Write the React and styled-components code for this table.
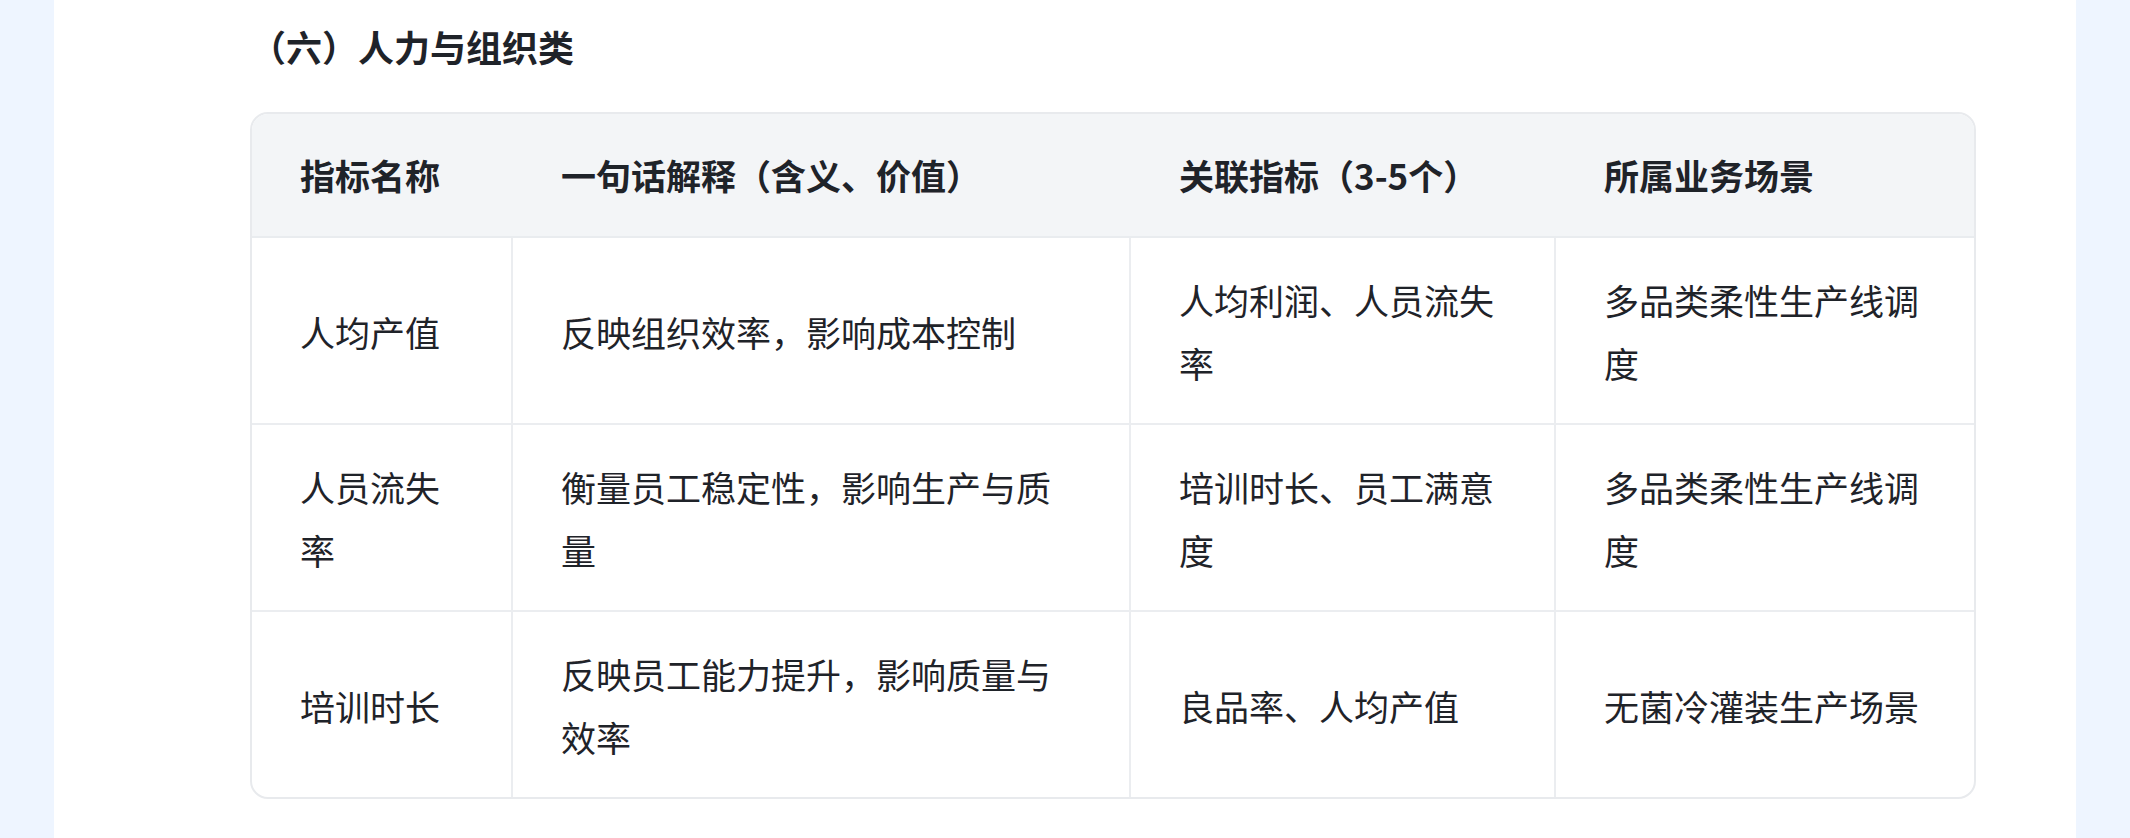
import React from "react";
import styled, { createGlobalStyle } from "styled-components";

const GlobalStyle = createGlobalStyle`
  html, body {
    margin: 0;
    padding: 0;
    background: #ffffff;
  }
  body {
    font-family: "Noto Sans CJK SC", "Noto Sans", sans-serif;
    color: #1f2329;
  }
`;

const headers = [
  "指标名称",
  "一句话解释（含义、价值）",
  "关联指标（3-5个）",
  "所属业务场景",
];

const rows = [
  ["人均产值", "反映组织效率，影响成本控制", "人均利润、人员流失率", "多品类柔性生产线调度"],
  ["人员流失率", "衡量员工稳定性，影响生产与质量", "培训时长、员工满意度", "多品类柔性生产线调度"],
  ["培训时长", "反映员工能力提升，影响质量与效率", "良品率、人均产值", "无菌冷灌装生产场景"],
];

const colWidths = [261, 618, 425, 422];

export default function App() {
  return (
    <>
      <GlobalStyle />
      <Page>
        <Strip />
        <Main>
          <SectionTitle>（六）人力与组织类</SectionTitle>
          <TableCard>
            <Table>
              <colgroup>
                {colWidths.map((w, i) => (
                  <col key={i} style={{ width: w }} />
                ))}
              </colgroup>
              <thead>
                <tr>
                  {headers.map((h) => (
                    <Th key={h}>{h}</Th>
                  ))}
                </tr>
              </thead>
              <tbody>
                {rows.map((row, r) => (
                  <tr key={r}>
                    {row.map((cell, c) => (
                      <Td key={c} $last={c === row.length - 1} $bottom={r === rows.length - 1}>
                        {cell}
                      </Td>
                    ))}
                  </tr>
                ))}
              </tbody>
            </Table>
          </TableCard>
        </Main>
        <Strip />
      </Page>
    </>
  );
}

/* Styled Components */

const Page = styled.div`
  display: flex;
  width: 100%;
  height: 838px;
  overflow: hidden;
`;

const Strip = styled.div`
  width: 54px;
  flex-shrink: 0;
  background: #eef5ff;
`;

const Main = styled.div`
  flex: 1;
  background: #ffffff;
  padding: 19px 100px 0 196px;
  box-sizing: border-box;
`;

const SectionTitle = styled.h3`
  margin: 0 0 39px;
  font-size: 36px;
  line-height: 54px;
  font-weight: 700;
  color: #1f2329;
`;

const TableCard = styled.div`
  border: 2px solid #e8eaed;
  border-radius: 18px;
  overflow: hidden;
  width: 1726px;
  box-sizing: border-box;
`;

const Table = styled.table`
  width: 100%;
  border-collapse: separate;
  border-spacing: 0;
  table-layout: fixed;
`;

const Th = styled.th`
  background: #f3f5f7;
  text-align: left;
  font-size: 35px;
  line-height: 63px;
  font-weight: 700;
  color: #1f2329;
  padding: 29px 48px 30px;
  border-bottom: 2px solid #e9ecef;
`;

const Td = styled.td`
  font-size: 35px;
  line-height: 63px;
  font-weight: 400;
  color: #1f2329;
  padding: 30px 48px 29px;
  vertical-align: middle;
  border-right: ${(p) => (p.$last ? "none" : "2px solid #ebedf0")};
  border-bottom: ${(p) => (p.$bottom ? "none" : "2px solid #ebedf0")};
  word-break: break-all;
`;
